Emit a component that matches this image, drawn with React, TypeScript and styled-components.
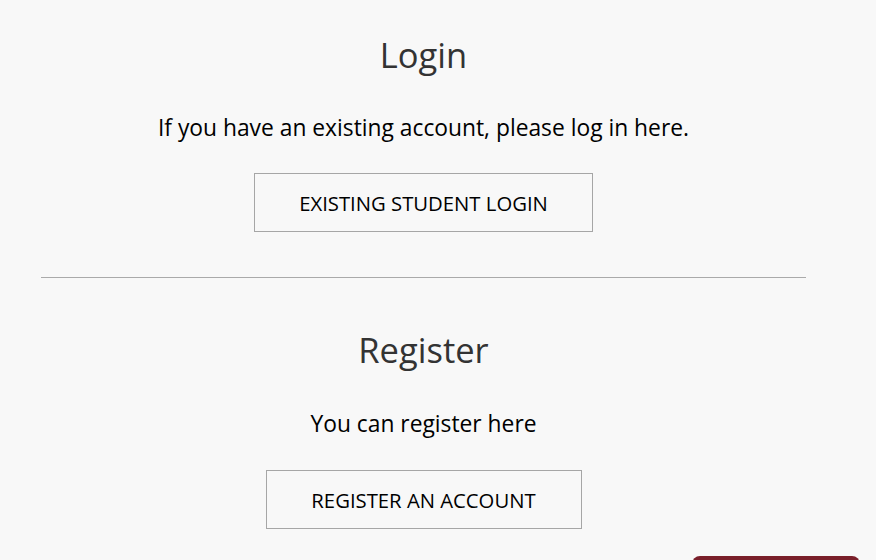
import React from 'react';
import styled, { createGlobalStyle } from 'styled-components';

const GlobalStyle = createGlobalStyle`
  html, body {
    margin: 0;
    padding: 0;
    background: #f8f8f8;
    font-family: "Open Sans", "Noto Sans", sans-serif;
    color: #000;
  }
`;

const StyledPage = styled.div`
  width: 765px;
  margin-left: 41px;
  padding-top: 35px;
`;

const StyledSection = styled.section`
  display: flex;
  flex-direction: column;
  align-items: center;
`;

const StyledTitle = styled.h2`
  margin: 0;
  font-size: 34.5px;
  line-height: 40px;
  font-weight: 400;
  color: #333;
`;

const StyledText = styled.p<{ $extra?: number }>`
  margin: ${({ $extra = 0 }) => `${39 + $extra}px 0 ${31 + $extra}px`};
  font-size: 22.8px;
  line-height: 28px;
`;

const StyledButton = styled.button<{ $width: number }>`
  width: ${({ $width }) => $width}px;
  height: 59px;
  background: transparent;
  border: 1px solid #a6a6a6;
  font-family: inherit;
  font-size: 20.3px;
  color: #000;
  text-transform: uppercase;
  cursor: pointer;
`;

const StyledDivider = styled.hr`
  margin: 45px 0 52px;
  border: 0;
  border-top: 1px solid #aaa;
`;

const StyledHelpTab = styled.div`
  position: fixed;
  left: 692px;
  top: 556px;
  width: 168px;
  height: 20px;
  background: #7a1f2a;
  border-radius: 8px 8px 0 0;
`;

const App = () => {
  return (
    <>
      <GlobalStyle />
      <StyledPage>
        <StyledSection>
          <StyledTitle>Login</StyledTitle>
          <StyledText>If you have an existing account, please log in here.</StyledText>
          <StyledButton $width={339}>Existing Student Login</StyledButton>
        </StyledSection>
        <StyledDivider />
        <StyledSection>
          <StyledTitle>Register</StyledTitle>
          <StyledText $extra={1}>You can register here</StyledText>
          <StyledButton $width={316}>Register an Account</StyledButton>
        </StyledSection>
      </StyledPage>
      <StyledHelpTab />
    </>
  );
};

export default App;
